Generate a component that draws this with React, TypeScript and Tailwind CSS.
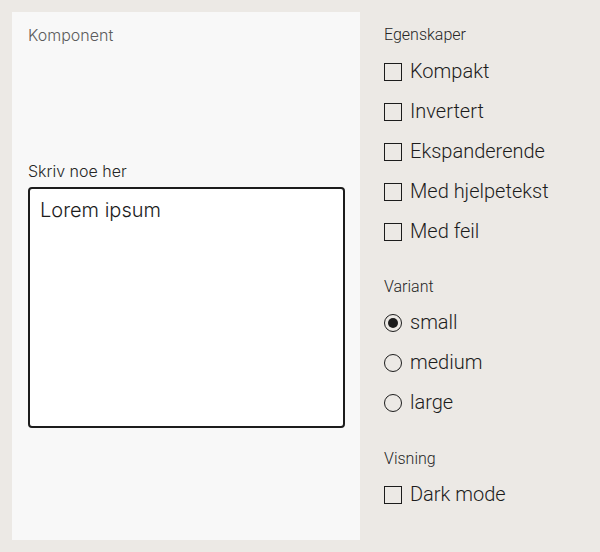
import { useState } from "react"

const egenskaper = ["Kompakt", "Invertert", "Ekspanderende", "Med hjelpetekst", "Med feil"]
const varianter = ["small", "medium", "large"]

function Checkbox({ label }: { label: string }) {
  return (
    <label className="flex h-10 items-center gap-2 text-[20px] font-light text-[#1c1c1c]">
      <span className="block h-[18px] w-[18px] border-[1.5px] border-[#1c1c1c] bg-transparent" />
      <span className="mb-[3px]">{label}</span>
    </label>
  )
}

function Radio({ label, checked }: { label: string; checked?: boolean }) {
  return (
    <label className="flex h-10 items-center gap-2 text-[20px] font-light text-[#1c1c1c]">
      <span className="flex h-[18px] w-[18px] items-center justify-center rounded-full border-[1.5px] border-[#1c1c1c]">
        {checked && <span className="block h-[10px] w-[10px] rounded-full bg-[#1c1c1c]" />}
      </span>
      <span className="mb-[3px]">{label}</span>
    </label>
  )
}

export default function App() {
  const [value, setValue] = useState("Lorem ipsum")

  return (
    <div className="flex h-[552px] w-[600px] gap-6 bg-[#ece9e5] p-3 font-['Roboto',sans-serif]">
      <div className="flex h-[528px] w-[348px] flex-col bg-[#f8f8f8] px-4 pt-[11px] font-['Inter',sans-serif]">
        <div className="text-[16px] font-light leading-6 text-[#5c5c5c]">Komponent</div>
        <div className="mt-[112px] text-[16px] font-light leading-6 text-[#262626]">Skriv noe her</div>
        <textarea
          value={value}
          onChange={(e) => setValue(e.target.value)}
          className="mt-1 h-[241px] w-[317px] resize-none rounded-[4px] border-2 border-[#1c1c1c] bg-white px-[10px] py-[7px] text-[20px] font-light leading-7 text-[#1c1c1c] outline-none"
        />
      </div>

      <div className="flex flex-col pt-[11px]">
        <div className="text-[16px] font-light leading-6 text-[#262626]">Egenskaper</div>
        <div className="mt-[5px] flex flex-col">
          {egenskaper.map((e) => (
            <Checkbox key={e} label={e} />
          ))}
        </div>

        <div className="mt-[23px] text-[16px] font-light leading-6 text-[#262626]">Variant</div>
        <div className="mt-1 flex flex-col">
          {varianter.map((v, i) => (
            <Radio key={v} label={v} checked={i === 0} />
          ))}
        </div>

        <div className="mt-6 text-[16px] font-light leading-6 text-[#262626]">Visning</div>
        <div className="mt-1">
          <Checkbox label="Dark mode" />
        </div>
      </div>
    </div>
  )
}
